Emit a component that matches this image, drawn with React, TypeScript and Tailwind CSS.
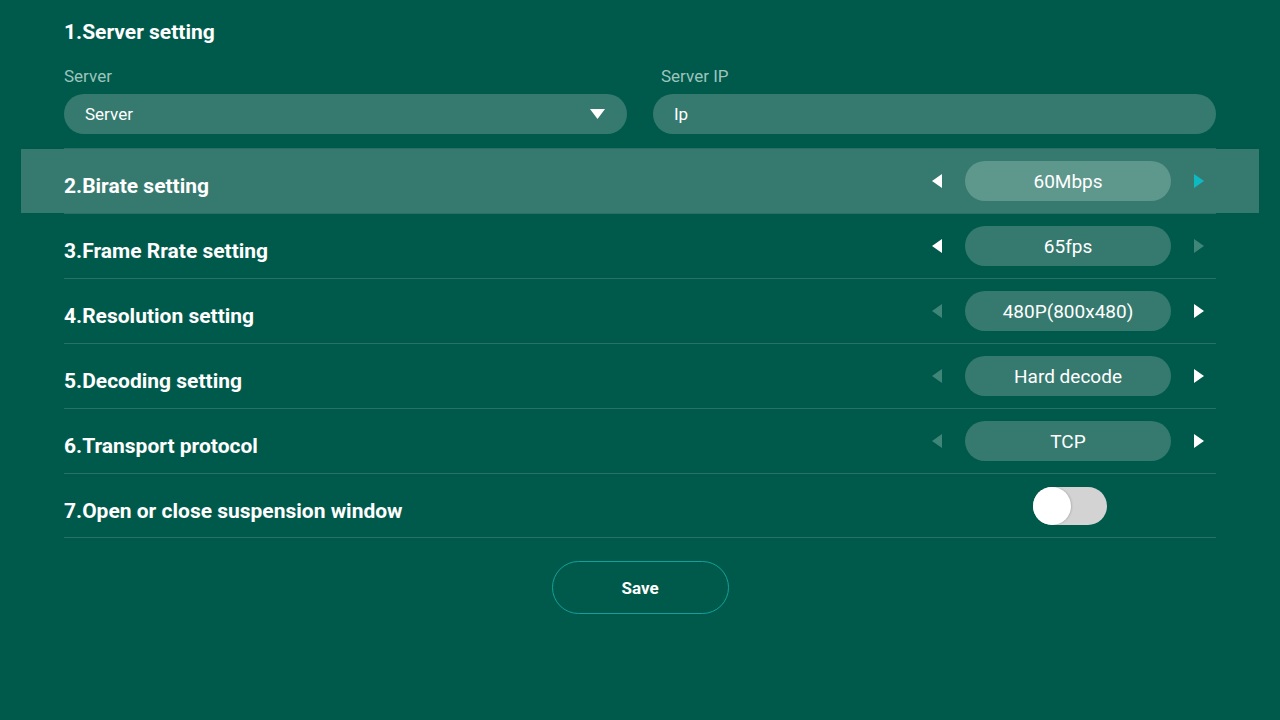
import { useState } from "react";

type Option = {
  title: string;
  value: string;
  prevOn: boolean;
  nextOn: boolean;
};

const options: Option[] = [
  { title: "2.Birate setting", value: "60Mbps", prevOn: true, nextOn: true },
  { title: "3.Frame Rrate setting", value: "65fps", prevOn: true, nextOn: false },
  { title: "4.Resolution setting", value: "480P(800x480)", prevOn: false, nextOn: true },
  { title: "5.Decoding setting", value: "Hard decode", prevOn: false, nextOn: true },
  { title: "6.Transport protocol", value: "TCP", prevOn: false, nextOn: true },
];

function Arrow({ dir, on, focused }: { dir: "left" | "right"; on: boolean; focused?: boolean }) {
  const color = focused ? "#0fb9c2" : on ? "#ffffff" : "#3f8578";
  return (
    <svg width="10" height="14" viewBox="0 0 10 14">
      {dir === "left" ? <path d="M10 0 L0 7 L10 14 Z" fill={color} /> : <path d="M0 0 L10 7 L0 14 Z" fill={color} />}
    </svg>
  );
}

export default function App() {
  const [floating, setFloating] = useState(false);
  const active = 0;

  return (
    <div className="min-h-[720px] w-full bg-[#005a4c] text-white" style={{ fontFamily: "Roboto, 'Noto Sans', sans-serif" }}>
      <div className="mx-auto w-[1152px]">
        <div className="pt-[19px] text-[21px] font-bold leading-[26px]">1.Server setting</div>

        <div className="mt-[21px] flex gap-[26px]">
          <div className="flex-1">
            <div className="text-[17px] leading-[20px] text-[#9cc4bb]">Server</div>
            <div className="mt-[8px] flex h-10 items-center justify-between rounded-full bg-[#367a6f] pl-[21px] pr-[22px] text-[17px]">
              <span className="pt-[2px]">Server</span>
              <svg width="15" height="10" viewBox="0 0 15 10">
                <path d="M0 0 L15 0 L7.5 10 Z" fill="#ffffff" />
              </svg>
            </div>
          </div>
          <div className="flex-1">
            <div className="pl-[8px] text-[17px] leading-[20px] text-[#9cc4bb]">Server IP</div>
            <div className="mt-[8px] flex h-10 items-center rounded-full bg-[#367a6f] px-[21px] pt-[2px] text-[17px]">Ip</div>
          </div>
        </div>

        <div className="mt-[14px] border-b border-[#2a7064]" />

        {options.map((o, i) => (
          <div key={o.title} className="border-b border-[#2a7064]">
            <div
              className={
                "flex h-16 items-center justify-between " +
                (i === active ? "-mx-[43px] bg-[#367a6f] px-[43px]" : "")
              }
            >
              <div className="mt-[11px] text-[21px] font-bold">{o.title}</div>
              <div className="mr-[12px] flex items-center gap-[23px]">
                <Arrow dir="left" on={o.prevOn} />
                <div
                  className={
                    "flex h-10 w-[206px] items-center justify-center rounded-full pt-[2px] text-[19px] " +
                    (i === active ? "bg-[#5e978c]" : "bg-[#367a6f]")
                  }
                >
                  {o.value}
                </div>
                <Arrow dir="right" on={o.nextOn} focused={i === active} />
              </div>
            </div>
          </div>
        ))}

        <div className="flex h-16 items-center justify-between border-b border-[#2a7064]">
          <div className="mt-[12px] text-[21px] font-bold">7.Open or close suspension window</div>
          <div className="mr-[15px] flex w-[262px] justify-center">
            <button
              onClick={() => setFloating(!floating)}
              className={
                "flex h-[38px] w-[74px] items-center rounded-full bg-[#d3d3d3] " + (floating ? "justify-end" : "justify-start")
              }
            >
              <span className="h-[38px] w-[38px] rounded-full bg-white shadow-[1px_0_2px_rgba(0,0,0,0.15)]" />
            </button>
          </div>
        </div>

        <div className="mt-[23px] flex justify-center">
          <button className="h-[53px] w-[177px] rounded-full border border-[#14a09b] pt-[2px] text-[17px] font-bold">
            Save
          </button>
        </div>
      </div>
    </div>
  );
}
